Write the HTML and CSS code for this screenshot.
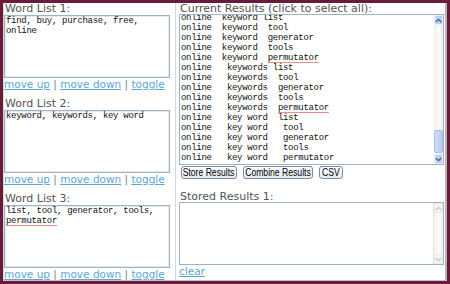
FILE: index.html
```html
<!DOCTYPE html>
<html>
<head>
<meta charset="utf-8">
<link rel="stylesheet" href="styles.css">
</head>
<body>
<div class="win">
  <div class="col-left">
    <section class="wl">
      <div class="lbl">Word List 1:</div>
      <div class="ta">find, buy, purchase, free,<br>online</div>
      <div class="links"><a href="#">move up</a> <span class="sep">|</span> <a href="#">move down</a> <span class="sep">|</span> <a href="#">toggle</a></div>
    </section>
    <section class="wl">
      <div class="lbl">Word List 2:</div>
      <div class="ta">keyword, keywords, key word</div>
      <div class="links"><a href="#">move up</a> <span class="sep">|</span> <a href="#">move down</a> <span class="sep">|</span> <a href="#">toggle</a></div>
    </section>
    <section class="wl">
      <div class="lbl">Word List 3:</div>
      <div class="ta">list, tool, generator, tools,<br><span class="sp">permutator</span></div>
      <div class="links"><a href="#">move up</a> <span class="sep">|</span> <a href="#">move down</a> <span class="sep">|</span> <a href="#">toggle</a></div>
    </section>
  </div>
  <div class="col-right">
    <div class="lbl lbl-r">Current Results (click to select all):</div>
    <div class="box results">
      <div class="lines">
        <div class="ln">online  keyword list</div>
        <div class="ln">online  keyword  tool</div>
        <div class="ln">online  keyword  generator</div>
        <div class="ln">online  keyword  tools</div>
        <div class="ln">online  keyword  <span class="sp">permutator</span></div>
        <div class="ln">online   keywords list</div>
        <div class="ln">online   keywords  tool</div>
        <div class="ln">online   keywords  generator</div>
        <div class="ln">online   keywords  tools</div>
        <div class="ln">online   keywords  <span class="sp">permutator</span></div>
        <div class="ln">online   key word  list</div>
        <div class="ln">online   key word   tool</div>
        <div class="ln">online   key word   generator</div>
        <div class="ln">online   key word   tools</div>
        <div class="ln">online   key word   permutator</div>
      </div>
      <div class="sb">
        <div class="sb-btn"><svg width="7" height="5" viewBox="0 0 7 5"><path d="M0.8 4 L3.5 1.3 L6.2 4" fill="none" stroke="#4a5f8c" stroke-width="1.3"/></svg></div>
        <div class="sb-track"><div class="sb-thumb"></div></div>
        <div class="sb-btn"><svg width="7" height="5" viewBox="0 0 7 5"><path d="M0.8 1 L3.5 3.7 L6.2 1" fill="none" stroke="#4a5f8c" stroke-width="1.3"/></svg></div>
      </div>
    </div>
    <div class="btns">
      <button class="btn btn-store"><span class="btn-t">Store Results</span></button>
      <button class="btn btn-combine"><span class="btn-t">Combine Results</span></button>
      <button class="btn btn-csv"><span class="btn-t">CSV</span></button>
    </div>
    <div class="lbl lbl-stored">Stored Results 1:</div>
    <div class="box stored">
      <div class="lines"></div>
      <div class="sb sb-off">
        <div class="sb-btn"><svg width="7" height="5" viewBox="0 0 7 5"><path d="M0.8 4 L3.5 1.3 L6.2 4" fill="none" stroke="#c8c8c8" stroke-width="1.2"/></svg></div>
        <div class="sb-track"></div>
        <div class="sb-btn"><svg width="7" height="5" viewBox="0 0 7 5"><path d="M0.8 1 L3.5 3.7 L6.2 1" fill="none" stroke="#c8c8c8" stroke-width="1.2"/></svg></div>
      </div>
    </div>
    <div class="links"><a href="#">clear</a></div>
  </div>
</div>
</body>
</html>
```
FILE: styles.css
```css
html, body {
  margin: 0;
  padding: 0;
}
body {
  background: #6a1b3b;
  width: 450px;
  height: 284px;
  overflow: hidden;
}
.win {
  margin: 3px 3px 0 3px;
  height: 277px;
  background: #fff;
  border-left: 1px solid #d6d6d6;
  border-right: 2px solid #b5b5b5;
  border-bottom: 1px solid #c6c6c6;
  display: grid;
  grid-template-columns: 172px 1fr;
  overflow: hidden;
}
.col-left {
  border-right: 1px solid #d8d8d8;
  display: flex;
  flex-direction: column;
  gap: 7px;
}
.col-right {
  padding: 0 1px 0 3px;
  display: flex;
  flex-direction: column;
}
.lbl {
  font-family: "DejaVu Sans", Verdana, sans-serif;
  font-size: 11px;
  line-height: 12px;
  height: 12px;
  color: #545454;
  padding-left: 1px;
  white-space: nowrap;
}
.lbl-r {
  line-height: 11px;
  height: 11px;
}
.lbl-stored {
  line-height: 11px;
  height: 11px;
  margin-top: 12px;
}
.ta {
  width: 166px;
  height: 63px;
  box-sizing: border-box;
  border: 1px solid #9fb3c7;
  box-shadow: inset 0 0 0 1px #e3e9ef;
  font-family: "Liberation Mono", "Courier New", monospace;
  font-size: 9px;
  letter-spacing: -0.3px;
  line-height: 10px;
  color: #111;
  padding: 0 1px;
  white-space: pre;
  overflow: hidden;
}
.sp {
  text-decoration: underline;
  text-decoration-color: #ef8c8c;
  text-underline-offset: 2px;
  text-decoration-thickness: 1px;
}
.links {
  font-family: "DejaVu Sans", Verdana, sans-serif;
  font-size: 10.5px;
  line-height: 13px;
  height: 13px;
  color: #7d7d7d;
  white-space: nowrap;
}
.links a {
  color: #5ba6d4;
  text-decoration: underline;
}
.col-right .links {
  line-height: 12px;
  height: 12px;
}
.box {
  display: flex;
  box-sizing: border-box;
  border: 1px solid #9fb3c7;
  overflow: hidden;
}
.results {
  height: 151px;
}
.stored {
  height: 63px;
}
.lines {
  flex: 1;
  overflow: hidden;
  font-family: "Liberation Mono", "Courier New", monospace;
  font-size: 9px;
  letter-spacing: -0.3px;
  line-height: 10px;
  color: #111;
  padding-left: 1px;
}
.ln {
  white-space: pre;
  height: 10px;
}
.ln:first-child {
  margin-top: -2px;
}
.sb {
  width: 9px;
  display: flex;
  flex-direction: column;
  background: linear-gradient(90deg, #f1f1ec, #fbfbf8 60%, #ecebe4);
}
.sb-btn {
  height: 10px;
  box-sizing: border-box;
  background: linear-gradient(90deg, #c7d6f6, #b6c9f2);
  border: 1px solid #e8eefc;
  display: flex;
  align-items: center;
  justify-content: center;
}
.sb-track {
  flex: 1;
  display: flex;
  flex-direction: column;
  justify-content: flex-end;
}
.sb-thumb {
  height: 23px;
  margin-bottom: 1px;
  box-sizing: border-box;
  background: linear-gradient(90deg, #cddaf8, #b8caf2);
  border: 1px solid #a9bde8;
  border-radius: 2px;
}
.sb-off {
  background: linear-gradient(90deg, #f3f3ef, #fbfbf9 60%, #eeeee8);
  border-left: 1px solid #e2e2dc;
}
.sb-off .sb-btn {
  background: #f5f5f2;
  border: 1px solid #ecece6;
}
.btns {
  display: flex;
  gap: 6px;
  margin-top: 1px;
  padding-left: 2px;
}
.btn {
  height: 13px;
  box-sizing: border-box;
  padding: 0;
  border: 1px solid #7b8da2;
  border-radius: 3px;
  background: linear-gradient(#fdfdfd, #e6ebf0);
  font-family: "Liberation Sans", Arial, sans-serif;
  font-size: 10.5px;
  line-height: 11px;
  color: #000;
  white-space: nowrap;
  overflow: hidden;
  display: flex;
  align-items: center;
  justify-content: center;
}
.btn-t {
  display: inline-block;
  transform: scaleX(0.82);
  transform-origin: center;
}
.btn-store { width: 56px; }
.btn-combine { width: 70px; }
.btn-csv { width: 24px; }
```
